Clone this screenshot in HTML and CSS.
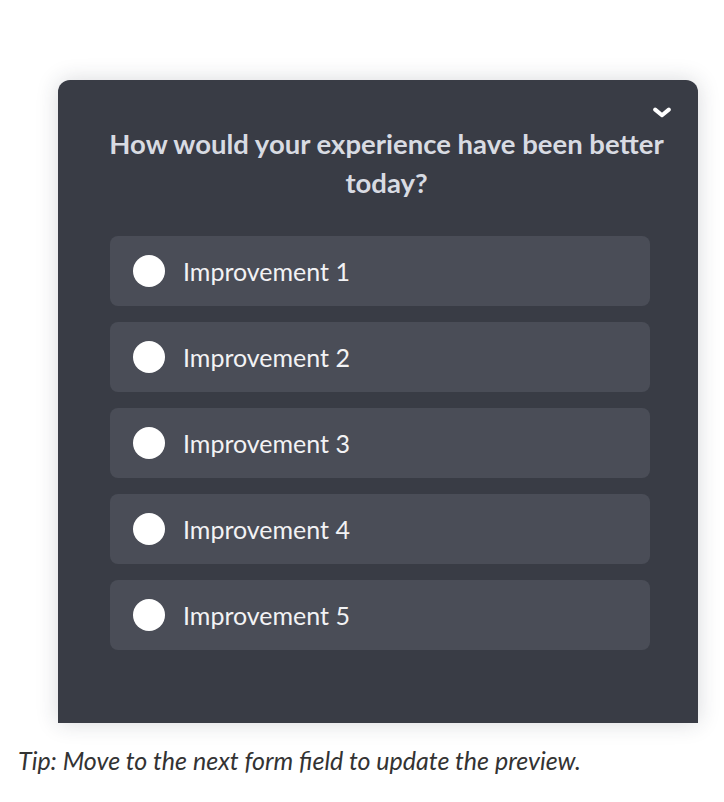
FILE: index.html
```html
<!DOCTYPE html>
<html lang="en">
<head>
<meta charset="utf-8">
<title>Survey preview</title>
<link rel="stylesheet" href="styles.css">
</head>
<body>
<div class="page">
  <div class="card">
    <button class="collapse" aria-label="Collapse">
      <svg width="18" height="12" viewBox="0 0 18 12"><path d="M2.2 2.6 L9 8.2 L15.8 2.6" fill="none" stroke="#ffffff" stroke-width="4" stroke-linecap="round" stroke-linejoin="round"/></svg>
    </button>
    <h2 class="question">How would your experience have been better today?</h2>
    <div class="options">
      <label class="option"><span class="radio"></span><span class="label">Improvement 1</span></label>
      <label class="option"><span class="radio"></span><span class="label">Improvement 2</span></label>
      <label class="option"><span class="radio"></span><span class="label">Improvement 3</span></label>
      <label class="option"><span class="radio"></span><span class="label">Improvement 4</span></label>
      <label class="option"><span class="radio"></span><span class="label">Improvement 5</span></label>
    </div>
  </div>
  <p class="tip">Tip: Move to the next form field to update the preview.</p>
</div>
</body>
</html>
```
FILE: styles.css
```css
html, body {
  margin: 0;
  padding: 0;
  background: #ffffff;
}
body {
  font-family: Lato, "Liberation Sans", sans-serif;
}
.page {
  padding-top: 80px;
}
.card {
  position: relative;
  margin-left: 58px;
  width: 640px;
  height: 643px;
  box-sizing: border-box;
  padding: 44px 34px 0 52px;
  background: #393c45;
  border-radius: 12px 12px 0 0;
  box-shadow: 0 0 22px rgba(40, 44, 60, 0.18);
}
.collapse {
  position: absolute;
  top: 27px;
  right: 27px;
  width: 18px;
  height: 12px;
  padding: 0;
  border: 0;
  background: none;
  display: block;
}
.collapse svg {
  display: block;
}
.question {
  margin: 0 -10px 0 -11px;
  text-align: center;
  color: #d8dbe2;
  font-size: 27.5px;
  line-height: 39px;
  font-weight: 700;
}
.options {
  margin-top: 34px;
  width: 540px;
  display: flex;
  flex-direction: column;
  gap: 16px;
}
.option {
  height: 70px;
  box-sizing: border-box;
  display: flex;
  align-items: center;
  gap: 18px;
  padding-left: 23px;
  background: #4a4d57;
  border-radius: 8px;
}
.radio {
  width: 32px;
  height: 32px;
  border-radius: 50%;
  background: #ffffff;
  flex: none;
}
.label {
  color: #f2f2f4;
  font-size: 25px;
}
.tip {
  margin: 22px 0 0;
  padding-left: 18px;
  font-style: italic;
  font-size: 25px;
  line-height: 30px;
  color: #333333;
}
```
